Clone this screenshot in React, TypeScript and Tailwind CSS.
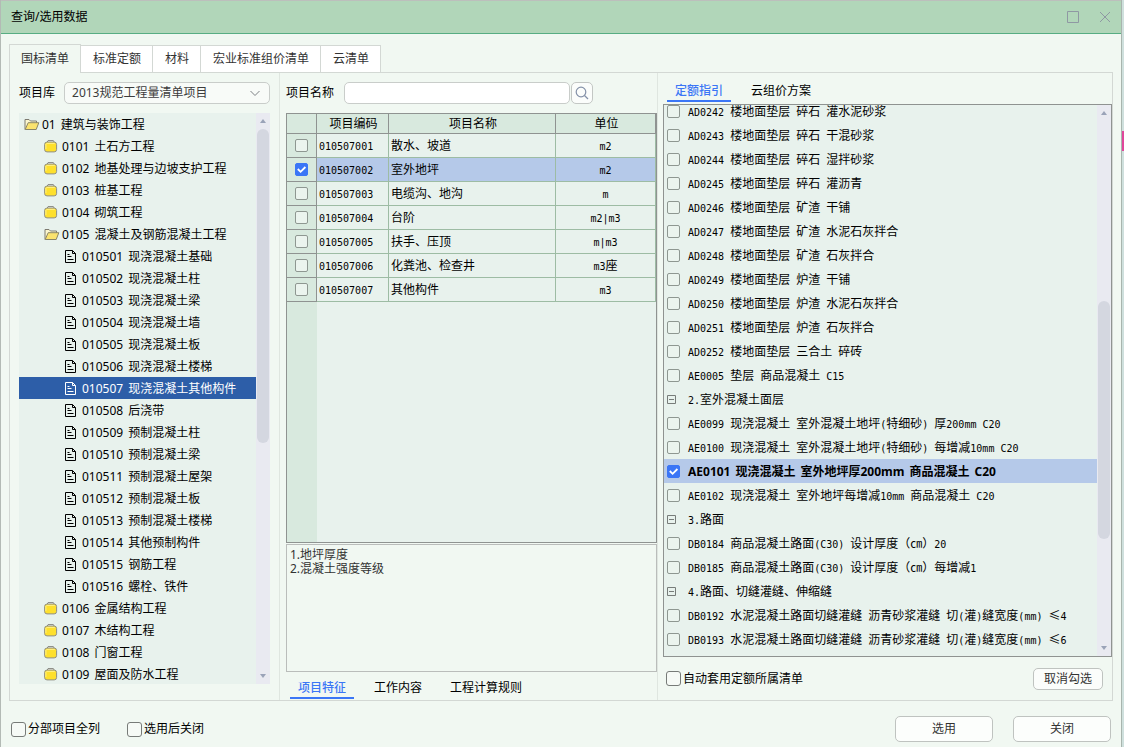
import { useState } from "react";
import type { ReactNode } from "react";

type TreeItem = { code: string; name: string; level: number; icon: "open" | "closed" | "doc" };

const tree: TreeItem[] = [
  { code: "01", name: "建筑与装饰工程", level: 0, icon: "open" },
  { code: "0101", name: "土石方工程", level: 1, icon: "closed" },
  { code: "0102", name: "地基处理与边坡支护工程", level: 1, icon: "closed" },
  { code: "0103", name: "桩基工程", level: 1, icon: "closed" },
  { code: "0104", name: "砌筑工程", level: 1, icon: "closed" },
  { code: "0105", name: "混凝土及钢筋混凝土工程", level: 1, icon: "open" },
  { code: "010501", name: "现浇混凝土基础", level: 2, icon: "doc" },
  { code: "010502", name: "现浇混凝土柱", level: 2, icon: "doc" },
  { code: "010503", name: "现浇混凝土梁", level: 2, icon: "doc" },
  { code: "010504", name: "现浇混凝土墙", level: 2, icon: "doc" },
  { code: "010505", name: "现浇混凝土板", level: 2, icon: "doc" },
  { code: "010506", name: "现浇混凝土楼梯", level: 2, icon: "doc" },
  { code: "010507", name: "现浇混凝土其他构件", level: 2, icon: "doc" },
  { code: "010508", name: "后浇带", level: 2, icon: "doc" },
  { code: "010509", name: "预制混凝土柱", level: 2, icon: "doc" },
  { code: "010510", name: "预制混凝土梁", level: 2, icon: "doc" },
  { code: "010511", name: "预制混凝土屋架", level: 2, icon: "doc" },
  { code: "010512", name: "预制混凝土板", level: 2, icon: "doc" },
  { code: "010513", name: "预制混凝土楼梯", level: 2, icon: "doc" },
  { code: "010514", name: "其他预制构件", level: 2, icon: "doc" },
  { code: "010515", name: "钢筋工程", level: 2, icon: "doc" },
  { code: "010516", name: "螺栓、铁件", level: 2, icon: "doc" },
  { code: "0106", name: "金属结构工程", level: 1, icon: "closed" },
  { code: "0107", name: "木结构工程", level: 1, icon: "closed" },
  { code: "0108", name: "门窗工程", level: 1, icon: "closed" },
  { code: "0109", name: "屋面及防水工程", level: 1, icon: "closed" },
];

const items = [
  { code: "010507001", name: "散水、坡道", unit: "m2" },
  { code: "010507002", name: "室外地坪", unit: "m2" },
  { code: "010507003", name: "电缆沟、地沟", unit: "m" },
  { code: "010507004", name: "台阶", unit: "m2|m3" },
  { code: "010507005", name: "扶手、压顶", unit: "m|m3" },
  { code: "010507006", name: "化粪池、检查井", unit: "m3座" },
  { code: "010507007", name: "其他构件", unit: "m3" },
];

const quotas = [
  { text: "AD0242 楼地面垫层 碎石 灌水泥砂浆" },
  { text: "AD0243 楼地面垫层 碎石 干混砂浆" },
  { text: "AD0244 楼地面垫层 碎石 湿拌砂浆" },
  { text: "AD0245 楼地面垫层 碎石 灌沥青" },
  { text: "AD0246 楼地面垫层 矿渣 干铺" },
  { text: "AD0247 楼地面垫层 矿渣 水泥石灰拌合" },
  { text: "AD0248 楼地面垫层 矿渣 石灰拌合" },
  { text: "AD0249 楼地面垫层 炉渣 干铺" },
  { text: "AD0250 楼地面垫层 炉渣 水泥石灰拌合" },
  { text: "AD0251 楼地面垫层 炉渣 石灰拌合" },
  { text: "AD0252 楼地面垫层 三合土 碎砖" },
  { text: "AE0005 垫层 商品混凝土 C15" },
  { text: "2.室外混凝土面层", group: true },
  { text: "AE0099 现浇混凝土 室外混凝土地坪(特细砂) 厚200mm C20" },
  { text: "AE0100 现浇混凝土 室外混凝土地坪(特细砂) 每增减10mm C20" },
  { text: "AE0101 现浇混凝土 室外地坪厚200mm 商品混凝土 C20" },
  { text: "AE0102 现浇混凝土 室外地坪每增减10mm 商品混凝土 C20" },
  { text: "3.路面", group: true },
  { text: "DB0184 商品混凝土路面(C30) 设计厚度（㎝）20" },
  { text: "DB0185 商品混凝土路面(C30) 设计厚度（㎝）每增减1" },
  { text: "4.路面、切缝灌缝、伸缩缝", group: true },
  { text: "DB0192 水泥混凝土路面切缝灌缝 沥青砂浆灌缝 切(灌)缝宽度(mm) ≤4" },
  { text: "DB0193 水泥混凝土路面切缝灌缝 沥青砂浆灌缝 切(灌)缝宽度(mm) ≤6" },
];

// latin runs are half the width of a CJK glyph
function Mono({ text }: { text: string }) {
  return (
    <span className="whitespace-pre pt-0.5 font-['Noto_Sans_CJK_SC',sans-serif] text-xs leading-3">
      {text.split(/([\x20-\x7e]+)/).map((part, i) =>
        i % 2 ? (
          <span key={i} className="font-['DejaVu_Sans_Mono',monospace] text-[10px]">
            {part}
          </span>
        ) : (
          part
        )
      )}
    </span>
  );
}

function OpenFolder() {
  return (
    <svg width="16" height="13" viewBox="0 0 16 13">
      <path d="M1 11.5V1.5h4l1.5 1.5h6v2" fill="#fbf6cf" stroke="#7d7a70" />
      <path d="M1.2 11.5 4.2 4.7h10.6l-2.6 6.8z" fill="#fbe36f" stroke="#8a8567" />
    </svg>
  );
}

function ClosedFolder() {
  return (
    <svg width="14" height="13" viewBox="0 0 14 13">
      <path d="M3 2.5 4 0.6h5.4l1 1.9" fill="#f3f3ea" stroke="#85867f" />
      <rect x="0.6" y="2.1" width="12" height="9.8" rx="2.4" fill="#fee02c" stroke="#8f8f86" />
      <path d="M2.4 3.4h8.4M1.9 4v5" stroke="#fff08a" fill="none" />
    </svg>
  );
}

function DocIcon() {
  return (
    <svg width="12" height="14" viewBox="0 0 12 14" fill="none" stroke="currentColor">
      <path d="M8.5 1.5h-7v12h10v-9zM8.5 1.5v3h3M3.5 5.5h2M3.5 7.5h4M3.5 10.5h6" />
    </svg>
  );
}

type CheckProps = { checked?: boolean; label?: string; id?: string; big?: boolean; onChange?: () => void };

function Check({ checked, label, id, big, onChange }: CheckProps) {
  return (
    <span className={`relative flex shrink-0 ${big ? "size-[15px]" : "size-[13px]"}`}>
      <input
        type="checkbox"
        id={id}
        aria-label={label}
        checked={checked}
        onChange={onChange}
        className={`peer m-0 size-full appearance-none border checked:border-[#3b76f6] checked:bg-[#3b76f6] ${
          big ? "rounded-[3px] border-[#777b78] bg-[#f6faf6]" : "rounded-[2px] border-[#8e9791] bg-[#ebf4ee]"
        }`}
      />
      <svg
        viewBox="0 0 13 13"
        className="pointer-events-none absolute inset-0 hidden size-full peer-checked:block"
        fill="none"
        stroke="#fff"
        strokeWidth="1.8"
      >
        <path d="M2.8 6 5.6 8.8 10.4 4" />
      </svg>
    </span>
  );
}

function LabelledCheck({ id, children }: { id: string; children: ReactNode }) {
  const [on, setOn] = useState(false);
  return (
    <div className="flex items-center gap-0.5">
      <Check id={id} big checked={on} onChange={() => setOn(!on)} />
      <label htmlFor={id}>{children}</label>
    </div>
  );
}

function ScrollBar({ before, thumb, after }: { before: number; thumb: number; after: number }) {
  return (
    <div className="flex w-3.5 shrink-0 flex-col items-center bg-[#e9eaf1] py-1.5 text-[#9aa3b8]">
      <svg width="6" height="4" viewBox="0 0 6 4" fill="currentColor">
        <path d="M0 4 3 0l3 4z" />
      </svg>
      <div className="my-1.5 flex w-full min-h-0 flex-1 flex-col items-center">
        <div style={{ flexGrow: before }} />
        <div className="w-3 rounded-md bg-[#d4d7e0]" style={{ flexGrow: thumb }} />
        <div style={{ flexGrow: after }} />
      </div>
      <svg width="6" height="4" viewBox="0 0 6 4" fill="currentColor">
        <path d="M0 0 3 4l3-4z" />
      </svg>
    </div>
  );
}

function LineTabs({ tabs }: { tabs: string[] }) {
  const [active, setActive] = useState(0);
  return (
    <div role="tablist" className="flex gap-3">
      {tabs.map((t, i) => (
        <button
          key={t}
          role="tab"
          aria-selected={i === active}
          onClick={() => setActive(i)}
          className={`h-6 border-b-2 px-2 pt-1 ${
            i === active ? "border-[#3b76f6] font-medium text-[#3b76f6]" : "border-transparent"
          }`}
        >
          {t}
        </button>
      ))}
    </div>
  );
}

function LeftPanel() {
  const [selected, setSelected] = useState("010507");
  return (
    <section className="flex min-h-0 flex-col border-r border-[#dfe6e0] pb-4 pl-[9px] pr-[9px] pt-[9px]">
      <div className="mb-[9px] flex h-[22px] items-center gap-[9px]">
        <label htmlFor="lib">项目库</label>
        <div className="relative flex-1">
          <select
            id="lib"
            className="block h-[22px] w-full appearance-none rounded-[5px] border border-[#c9cdca] bg-[#f8fbf8] px-[7px] text-[#3c3c3c]"
          >
            <option>2013规范工程量清单项目</option>
          </select>
          <svg
            className="pointer-events-none absolute right-2.5 top-2"
            width="10"
            height="7"
            viewBox="0 0 10 7"
            fill="none"
            stroke="#7c8084"
          >
            <path d="M0.5 1 5 5.5 9.5 1" />
          </svg>
        </div>
      </div>
      <div className="flex min-h-0 flex-1 bg-[#e8f2ed]">
        <ul role="tree" className="min-w-0 flex-1 overflow-hidden">
          {tree.map((n) => (
            <li
              key={n.code}
              role="treeitem"
              aria-selected={n.code === selected}
              onClick={() => setSelected(n.code)}
              className={`flex h-[22px] items-center whitespace-nowrap ${
                n.level === 0 ? "pl-[5px]" : n.level === 1 ? "pl-[25px]" : "pl-[45px]"
              } ${n.code === selected ? "bg-[#2d5ea8] text-white" : ""}`}
            >
              <span className="flex w-[18px] shrink-0">
                {n.icon === "open" ? <OpenFolder /> : n.icon === "closed" ? <ClosedFolder /> : <DocIcon />}
              </span>
              <span className="flex gap-[5px] pt-0.5">
                <span>{n.code}</span>
                <span>{n.name}</span>
              </span>
            </li>
          ))}
        </ul>
        <ScrollBar before={0} thumb={313} after={225} />
      </div>
    </section>
  );
}

function MiddlePanel() {
  const [picked, setPicked] = useState("010507002");
  return (
    <section className="flex min-h-0 min-w-0 flex-col border-r border-[#dfe6e0] pb-px pl-1.5 pt-[9px]">
      <div className="mb-[9px] flex h-[22px] items-center">
        <label htmlFor="keyword" className="mr-2.5">
          项目名称
        </label>
        <input id="keyword" className="h-[22px] w-[226px] rounded-[5px] border border-[#c9cdca] bg-white px-2 outline-none" />
        <button
          aria-label="搜索"
          className="ml-px flex size-[22px] items-center justify-center rounded-[5px] border border-[#c3c7c4] bg-[#fbfdfb]"
        >
          <svg width="14" height="14" viewBox="0 0 14 14" fill="none" stroke="#8491a8" strokeWidth="1.2">
            <circle cx="6" cy="6" r="4.8" />
            <path d="m9.5 9.5 3.5 3.5" />
          </svg>
        </button>
      </div>
      <div className="flex min-h-0 flex-1 flex-col border border-[#8f9391] bg-[#e8f2ed]">
        <table className="w-full table-fixed border-separate border-spacing-0">
          <colgroup>
            <col className="w-[30px]" />
            <col className="w-[72px]" />
            <col />
            <col className="w-[100px]" />
          </colgroup>
          <thead>
            <tr className="h-5 bg-[#d8e9de]">
              {["", "项目编码", "项目名称", "单位"].map((h, i) => (
                <th key={i} className="border-b border-r border-[#8f9391] p-0 pl-0.5 pt-px font-normal leading-[18px]">
                  {h}
                </th>
              ))}
            </tr>
          </thead>
          <tbody>
            {items.map((r) => (
              <tr key={r.code} className={`h-6 ${r.code === picked ? "bg-[#b5c9e9]" : ""}`}>
                <td className="border-b border-r border-[#8f9391] bg-[#d8e9de] p-0 pl-2">
                  <Check checked={r.code === picked} label={r.name} onChange={() => setPicked(r.code)} />
                </td>
                <td className="border-b border-r border-[#9dbca4] p-0 pl-0.5 leading-5">
                  <Mono text={r.code} />
                </td>
                <td className="border-b border-r border-[#9dbca4] p-0 pl-0.5 leading-5">
                  <Mono text={r.name} />
                </td>
                <td className="border-b border-r border-[#9dbca4] p-0 text-center leading-5">
                  <Mono text={r.unit} />
                </td>
              </tr>
            ))}
          </tbody>
        </table>
        <div className="w-[30px] flex-1 bg-[#d8e9de]" />
      </div>
      <textarea
        aria-label="项目特征"
        readOnly
        value={"1.地坪厚度\n2.混凝土强度等级"}
        className="mt-px block h-32 resize-none border border-[#babdbb] bg-transparent px-[3px] py-[3px] text-xs leading-[14px] text-[#333] outline-none"
      />
      <div className="mt-[3px] pl-1">
        <LineTabs tabs={["项目特征", "工作内容", "工程计算规则"]} />
      </div>
    </section>
  );
}

function RightPanel() {
  const [picked, setPicked] = useState(15);
  return (
    <section className="flex min-h-0 min-w-0 flex-col pl-[5px] pt-[5px]">
      <div className="mb-0.5 pl-1">
        <LineTabs tabs={["定额指引", "云组价方案"]} />
      </div>
      <div className="flex min-h-0 flex-1 border border-[#8f9391] bg-[#e8f2ed]">
        <div className="min-w-0 flex-1 overflow-hidden">
          {/* scrolled a quarter row down */}
          <ul className="-mt-1.5">
            {quotas.map((q, i) => (
              <li
                key={q.text}
                className={`flex h-6 items-center gap-2 whitespace-nowrap pl-[3px] ${i === picked ? "bg-[#b5c9e9]" : ""}`}
              >
                {q.group ? (
                  <button aria-label="折叠" className="flex w-[13px] shrink-0">
                    <svg width="9" height="9" viewBox="0 0 9 9" fill="none" stroke="#777c79">
                      <path d="M0.5 0.5h8v8h-8zM2 4.5h5" />
                    </svg>
                  </button>
                ) : (
                  <Check checked={i === picked} label={q.text} onChange={() => setPicked(i)} />
                )}
                {i === picked ? (
                  <span className="flex gap-[5px] pt-0.5 font-bold">
                    {q.text.split(" ").map((word) => (
                      <span key={word}>{word}</span>
                    ))}
                  </span>
                ) : (
                  <Mono text={q.text} />
                )}
              </li>
            ))}
          </ul>
        </div>
        <ScrollBar before={180} thumb={238} after={101} />
      </div>
      <div className="flex h-[43px] items-center justify-between pl-[3px] pr-[9px]">
        <LabelledCheck id="auto">自动套用定额所属清单</LabelledCheck>
        <button className="h-[22px] w-[70px] rounded-[5px] border border-[#bfc3c0] bg-[#fbfdfb] text-[#333]">取消勾选</button>
      </div>
    </section>
  );
}

export default function App() {
  const [tab, setTab] = useState(0);
  return (
    <div className="flex h-screen border-l border-[#b3bab5] bg-[#f1f8f2] font-['Noto_Sans','Noto_Sans_CJK_SC',sans-serif] text-xs text-black">
      <div className="flex min-w-0 flex-1 flex-col">
        <header className="flex h-[34px] shrink-0 items-center justify-between border-b border-t border-b-[#57ad83] border-t-[#bcbfbc] bg-[#b1d6b9] pl-2.5 pr-2.5">
          <h1>查询/选用数据</h1>
          <div className="flex gap-5 text-[#8f98a3]">
            <button aria-label="最大化">
              <svg width="12" height="12" viewBox="0 0 12 12" fill="none" stroke="currentColor">
                <path d="M0.5 0.5h11v11h-11z" />
              </svg>
            </button>
            <button aria-label="关闭窗口">
              <svg width="12" height="12" viewBox="0 0 12 12" fill="none" stroke="currentColor">
                <path d="m1 1 10 10M11 1 1 11" />
              </svg>
            </button>
          </div>
        </header>

        <main className="flex min-h-0 flex-1 flex-col pl-2 pr-2 pt-2.5">
          <div role="tablist" className="z-10 -mb-px flex items-end">
            {["国标清单", "标准定额", "材料", "宏业标准组价清单", "云清单"].map((t, i) => (
              <button
                key={t}
                role="tab"
                aria-selected={i === tab}
                onClick={() => setTab(i)}
                className={`border-r border-t border-[#d3d8d4] pl-3 pr-[11px] text-[#333] first:border-l first:pl-[11px] ${
                  i === tab ? "h-[29px] bg-[#f1f8f2]" : "h-7 border-b bg-white"
                }`}
              >
                {t}
              </button>
            ))}
          </div>
          <div className="grid min-h-0 flex-1 grid-cols-[270px_378fr_454fr] grid-rows-1 border border-[#d3d8d4]">
            <LeftPanel />
            <MiddlePanel />
            <RightPanel />
          </div>
        </main>

        <footer className="flex h-[46px] shrink-0 items-center justify-between pb-1 pl-2.5 pr-2.5 pt-3.5">
          <div className="flex gap-[27px]">
            <LabelledCheck id="all">分部项目全列</LabelledCheck>
            <LabelledCheck id="close">选用后关闭</LabelledCheck>
          </div>
          <div className="flex gap-5">
            {["选用", "关闭"].map((t) => (
              <button key={t} className="h-[26px] w-[98px] rounded-[5px] border border-[#bfc3c0] bg-[#fcfefc] text-[#333]">
                {t}
              </button>
            ))}
          </div>
        </footer>
      </div>
      {/* window behind the dialog */}
      <div className="w-[3px] shrink-0 border-l border-[#a9b5ae] bg-[#cfe0dd] pt-[131px]">
        <div className="h-5 bg-[#e0479b]" />
      </div>
    </div>
  );
}
